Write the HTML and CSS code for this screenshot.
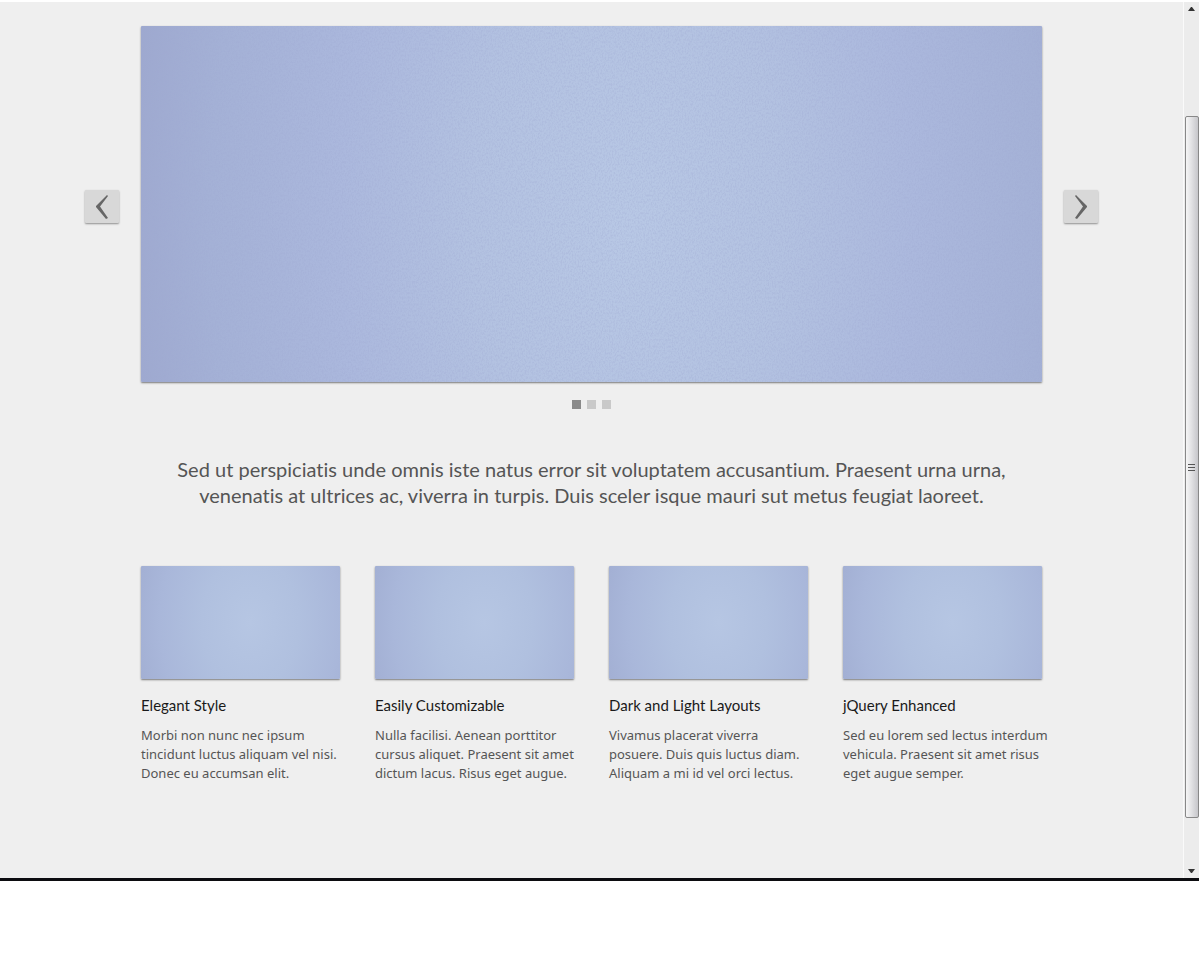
FILE: index.html
```
<!DOCTYPE html>
<html lang="en">
<head>
    <meta charset="UTF-8">
    <meta name="viewport" content="width=device-width, initial-scale=1.0">
    <title>Home</title>
    <link rel="stylesheet" href="styles.css">
</head>
<body>
    <div class="window">
        <main class="page">
            <section class="slider">
                <button class="arrow" type="button" aria-label="Previous slide">
                    <svg viewBox="0 0 12 24" width="12" height="24"><path d="M11 0 L0 11 V12 L10 24 L12 23 L4 11.5 L12 1 Z"/></svg>
                </button>
                <div class="slide photo">
                    <svg class="grain" width="100%" height="100%" aria-hidden="true">
                        <filter id="grain" x="0" y="0" width="100%" height="100%">
                            <feTurbulence type="fractalNoise" baseFrequency="0.7 0.45" numOctaves="3"/>
                            <feColorMatrix values="0 0 0 0 0.35  0 0 0 0 0.4  0 0 0 0 0.65  3 0 0 0 -1.2"/>
                        </filter>
                        <rect width="100%" height="100%" filter="url(#grain)"/>
                    </svg>
                </div>
                <button class="arrow" type="button" aria-label="Next slide">
                    <svg viewBox="0 0 12 24" width="12" height="24"><path d="M1 0 L12 11 V12 L2 24 L0 23 L8 11.5 L0 1 Z"/></svg>
                </button>
            </section>
            <nav class="pager">
                <button class="dot active" type="button" aria-label="Slide 1"></button>
                <button class="dot" type="button" aria-label="Slide 2"></button>
                <button class="dot" type="button" aria-label="Slide 3"></button>
            </nav>
            <p class="slogan">Sed ut perspiciatis unde omnis iste natus error sit voluptatem accusantium. Praesent urna urna,<br>venenatis at ultrices ac, viverra in turpis. Duis sceler isque mauri sut metus feugiat laoreet.</p>
            <section class="features">
                <article class="feature">
                    <div class="thumb photo"></div>
                    <h2>Elegant Style</h2>
                    <p>Morbi non nunc nec ipsum<br>tincidunt luctus aliquam vel nisi.<br>Donec eu accumsan elit.</p>
                </article>
                <article class="feature">
                    <div class="thumb photo"></div>
                    <h2>Easily Customizable</h2>
                    <p>Nulla facilisi. Aenean porttitor<br>cursus aliquet. Praesent sit amet<br>dictum lacus. Risus eget augue.</p>
                </article>
                <article class="feature">
                    <div class="thumb photo"></div>
                    <h2>Dark and Light Layouts</h2>
                    <p>Vivamus placerat viverra<br>posuere. Duis quis luctus diam.<br>Aliquam a mi id vel orci lectus.</p>
                </article>
                <article class="feature">
                    <div class="thumb photo"></div>
                    <h2>jQuery Enhanced</h2>
                    <p>Sed eu lorem sed lectus interdum<br>vehicula. Praesent sit amet risus<br>eget augue semper.</p>
                </article>
            </section>
        </main>
        <div class="scrollbar" aria-hidden="true">
            <svg class="tick" viewBox="0 0 7 4" width="7" height="4"><path d="M3 0h1l3 4H0z"/></svg>
            <div class="handle"><i></i><i></i><i></i></div>
            <svg class="tick" viewBox="0 0 7 4" width="7" height="4"><path d="M0 0h7L4 4H3z"/></svg>
        </div>
    </div>
</body>
</html>
```
FILE: styles.css
```
/* Basic styling */
body {
    margin: 0;
    padding: 2px 1px 0 0;
    background: #fff;
    font-family: Lato, sans-serif;
    font-variant-ligatures: none;
}
.window {
    display: flex;
    background: #efefef;
    border-bottom: 3px solid #0c0c10;
}
.page {
    flex: 1;
    padding: 24px 0 95px;
}

/* Slider */
.slider {
    display: flex;
    justify-content: center;
    align-items: flex-start;
    gap: 22px;
}
.photo {
    background: radial-gradient(ellipse 70% 170% at 55% 50%, #b6c6e3 0%, #b0c0df 35%, #a9b7da 65%, #9da9ce 100%);
    box-shadow: 0 1px 2px rgba(0, 0, 0, 0.5);
    border-radius: 1px;
}
.slide {
    flex: 0 1 901px;
    height: 356px;
    background: radial-gradient(ellipse 58% 240% at 54% 55%, #b8c8e5 0%, #b3c2e1 30%, #abb8dd 55%, #a4b1d6 80%, #9ca6cd 100%);
}
.grain {
    display: block;
    opacity: 0.3;
}
.arrow {
    display: flex;
    flex: none;
    justify-content: center;
    align-items: center;
    width: 34px;
    height: 33px;
    margin: 164px 0 0;
    padding: 0;
    border: none;
    border-radius: 1px;
    background: #d8d8d8;
    box-shadow: 0 1px 2px rgba(0, 0, 0, 0.4);
    cursor: pointer;
}
.arrow path {
    fill: #666;
}
.pager {
    display: flex;
    justify-content: center;
    gap: 6px;
    margin-top: 18px;
}
.dot {
    width: 9px;
    height: 9px;
    padding: 0;
    border: none;
    background: #c9c9c9;
    cursor: pointer;
}
.dot.active {
    background: #8a8a8a;
}

/* Text and columns */
.slogan {
    margin: 47px 0 58px;
    font-size: 20px;
    line-height: 26px;
    text-align: center;
    color: #555;
}
.features {
    display: grid;
    grid-template-columns: repeat(4, minmax(0, 1fr));
    gap: 35px;
    max-width: 901px;
    margin: 0 auto;
}
.thumb {
    height: 113px;
}
.feature h2 {
    margin: 15px 0 10px;
    font-size: 15px;
    font-weight: 400;
    line-height: 22px;
    color: #1a1a1a;
}
.feature p {
    margin: 0;
    font-family: "Noto Sans", sans-serif;
    font-size: 13px;
    line-height: 19px;
    white-space: nowrap;
    color: #555;
}

/* Scrollbar */
.scrollbar {
    display: flex;
    flex-direction: column;
    align-items: center;
    box-sizing: border-box;
    width: 16px;
    padding: 5px 0;
    border-left: 1px solid #fafafa;
    background: #ececec;
}
.tick {
    fill: #333;
}
.handle {
    display: flex;
    flex: 1;
    flex-direction: column;
    justify-content: center;
    align-items: center;
    gap: 2px;
    box-sizing: border-box;
    width: 14px;
    margin: 105px 0 51px;
    border: 1px solid #888;
    border-radius: 2px;
    background: linear-gradient(to right, #f6f6f6, #e2e2e4 45%, #c6c6ca);
}
.handle i {
    width: 7px;
    height: 1px;
    background: #555;
}
```
